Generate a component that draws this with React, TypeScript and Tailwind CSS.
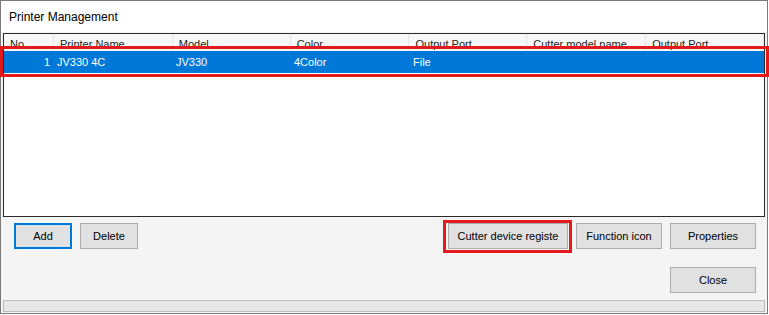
import React from "react";

const cols = [
  { label: "No.", w: 50 },
  { label: "Printer Name", w: 119 },
  { label: "Model", w: 118 },
  { label: "Color", w: 119 },
  { label: "Output Port", w: 118 },
  { label: "Cutter model name", w: 119 },
  { label: "Output Port", w: 118 },
];

function Btn({
  children,
  className = "",
  focused = false,
}: {
  children: React.ReactNode;
  className?: string;
  focused?: boolean;
}) {
  return (
    <div
      className={
        "h-[26px] flex items-center justify-center bg-[#e1e1e1] text-[11px] text-black " +
        (focused ? "border-2 border-[#0078d7] " : "border border-[#adadad] ") +
        className
      }
    >
      {children}
    </div>
  );
}

export default function App() {
  return (
    <div className="relative w-[769px] h-[315px] bg-white" style={{ fontFamily: '"Liberation Sans", Arial, sans-serif' }}>
      <div className="w-[768px] h-[314px] border border-[#7a7a7a] bg-[#f4f4f4] flex flex-col">
        <div className="h-[31px] bg-white flex items-center pl-[8px] text-[12px] text-black shrink-0">
          Printer Management
        </div>
        <div className="mt-[1px] mx-[2px] h-[184px] border border-[#2b2b2b] bg-white flex flex-col shrink-0">
          <div className="h-[17px] flex bg-[#f7f7f7] shrink-0">
            {cols.map((c, i) => (
              <div
                key={i}
                className="h-full border-r border-[#e5e5e5] text-[11px] text-[#222] pl-[6px] pt-[4px] leading-[12px] overflow-hidden whitespace-nowrap"
                style={{ width: c.w }}
              >
                {c.label}
              </div>
            ))}
          </div>
          <div className="h-[22px] bg-[#0078d7] text-white text-[11px] flex items-center">
            <div className="w-[50px] text-right pr-[4px]">1</div>
            <div className="w-[119px] pl-[3px]">JV330 4C</div>
            <div className="w-[118px] pl-[3px]">JV330</div>
            <div className="w-[119px] pl-[3px]">4Color</div>
            <div className="w-[118px] pl-[3px]">File</div>
          </div>
        </div>
        <div className="flex mt-[6px] pl-[13px] pr-[11px]">
          <Btn className="w-[58px]" focused>
            Add
          </Btn>
          <Btn className="w-[58px] ml-[8px]">Delete</Btn>
          <div className="flex-1" />
          <Btn className="w-[120px]">Cutter device registe</Btn>
          <Btn className="w-[86px] ml-[8px]">Function icon</Btn>
          <Btn className="w-[86px] ml-[8px]">Properties</Btn>
        </div>
        <div className="flex justify-end mt-[18px] pr-[11px]">
          <Btn className="w-[86px]">Close</Btn>
        </div>
        <div className="mt-[7px] mx-[2px] h-[12px] bg-[#e6e6e6] border border-[#bcbcbc]" />
      </div>
      <div className="absolute left-0 top-[46px] w-[769px] h-[31px] border-[3px] border-[#e3191c]" />
      <div className="absolute left-[443px] top-[220px] w-[129px] h-[33px] border-[3px] border-[#e3191c]" />
    </div>
  );
}
